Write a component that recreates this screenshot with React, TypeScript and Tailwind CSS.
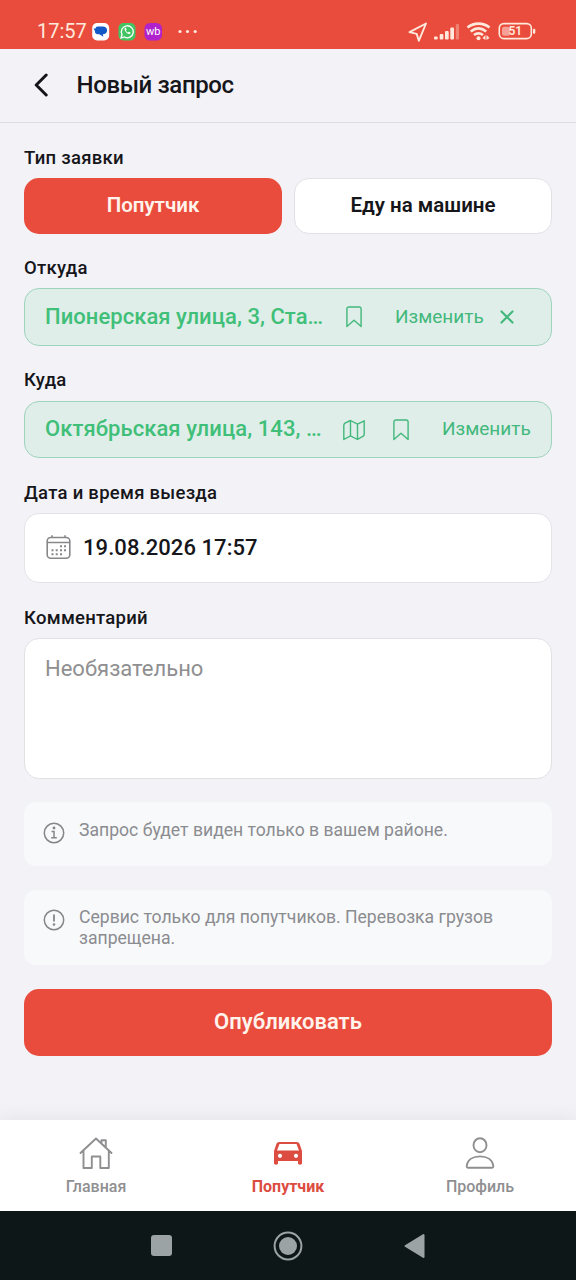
import type { ReactNode } from "react";

function StatusBar() {
  return (
    <div className="flex h-[49px] items-end bg-[#e94c3c] pr-[40px] pb-[6px] pl-[37px] text-[#ffe9dc]">
      <span className="w-[55px] text-[20px] leading-[23px] whitespace-nowrap">17:57</span>
      <svg className="mb-[2px] h-[18px] w-[72px]" viewBox="0 0 72 18">
        <rect x="0.2" width="17" height="17.5" rx="5" fill="#fff" />
        <path d="M5.5 3.5h5.3c2.5 0 4.3 1.5 4.3 4 0 2.3-1.8 3.800-4.3 3.800l.5 2.500-3.800-2.500H6c-2 0-3-1-3-2.500V8L1.500 5.500h2c.3-1.200 1-2 2-2z" fill="#1459c5" />
        <rect x="26.5" width="17" height="17.5" rx="5" fill="#43c463" />
        <path d="M29 15l1-3.500a6 6 0 1 1 2.400 2.500z" fill="none" stroke="#fff" strokeWidth="1.3" />
        <path d="M32.8 5.200c.7-.7 1.300-.3 1.800 1.300l-.7.9c.4 1 1.200 1.800 2.200 2.200l.9-.8c1.500.6 2 1 1.300 1.800-1.200 1.600-6.800-2.300-5.500-5.400z" fill="#fff" />
        <rect x="52.5" width="17.500" height="17.500" rx="5.500" fill="#b023cc" />
        <text x="61.200" y="12" textAnchor="middle" fontSize="11" fill="#fff">wb</text>
      </svg>
      <svg className="ml-[14px] h-[20px] w-[20px]" viewBox="0 0 20 20" fill="currentColor">
        <circle cx="2" cy="8.500" r="1.600" /><circle cx="9.500" cy="8.500" r="1.600" /><circle cx="17.200" cy="8.500" r="1.600" />
      </svg>
      <svg className="mb-[1px] ml-auto h-[20px] w-[128px]" viewBox="0 0 128 20" fill="none" stroke="currentColor">
        <path d="M18 1.500L1.500 10.200l7.200 1.700 2.100 6.900z" strokeWidth="1.900" strokeLinejoin="round" />
        <g fill="currentColor" stroke="none">
          <rect x="26" y="14.500" width="3.700" height="3" rx="1" />
          <rect x="31.700" y="12" width="3.700" height="5.500" rx="1" />
          <rect x="37" y="9" width="3.700" height="8.500" rx="1" />
          <rect x="42.300" y="5.500" width="3.700" height="12" rx="1" />
          <rect x="47.800" y="2" width="3.200" height="15.500" rx="1" opacity=".35" />
          <circle cx="70.500" cy="16.200" r="2" />
          <path d="M77.500 13v5l-3-2zM78.500 18v-5l3 3z" />
        </g>
        <path d="M59.500 5.500c6.500-5.200 15.500-5.200 22 0M62.700 9.500c5-4 10.500-4 15.500 0M66 13c3-2.200 6-2.200 9 0" strokeWidth="2.700" />
        <rect x="91.300" y="1.600" width="32" height="15" rx="4.500" strokeWidth="1.600" />
        <rect x="94" y="4.700" width="8" height="9" rx="2" fill="#f7a095" stroke="none" />
        <rect x="125" y="6.700" width="2.300" height="5" rx="1" fill="currentColor" stroke="none" />
        <text x="107.300" y="13.400" textAnchor="middle" fontSize="12" fontWeight="600" fill="currentColor" stroke="none">51</text>
      </svg>
    </div>
  );
}

function Label({ children }: { children: ReactNode }) {
  return <div className="h-[22px] text-[18.500px] leading-[22px] font-medium tracking-[0.270px] text-[#16161a]">{children}</div>;
}

function Bookmark() {
  return (
    <svg className="h-[22px] w-[16px] shrink-0" viewBox="0 0 16 22" fill="none" stroke="#43b87c" strokeWidth="1.400" strokeLinejoin="round">
      <path d="M.9 3A2 2 0 0 1 2.900 1h10.200a2 2 0 0 1 2 2v17.500L8 14.200.9 20.500z" />
    </svg>
  );
}

function MapIcon() {
  return (
    <svg className="h-[22px] w-[22px] shrink-0" viewBox="0 0 22 22" fill="none" stroke="#43b87c" strokeWidth="1.400" strokeLinejoin="round">
      <path d="M7.500 1.500L2 4.200Q.8 5 .8 6.500v14l6.700-3.700 7 3.700 5.700-3.300q1-.6 1-1.900V1.800l-6.700 3.400zM7.500 1.500v15.300M14.500 5.200v15.300" />
    </svg>
  );
}

function Notice({ children, icon, className }: { children: ReactNode; icon: ReactNode; className: string }) {
  return (
    <div className={`flex gap-[14px] rounded-[12px] bg-[#f8f9fb] pl-[19px] text-[17.600px] leading-[21px] text-[#8b8c90] ${className}`}>
      <svg className="mt-[2px] h-[22px] w-[22px] shrink-0" viewBox="0 0 22 22" fill="none" stroke="#85868a" strokeWidth="1.500">
        <circle cx="11" cy="11" r="9.700" />
        {icon}
      </svg>
      <p className="whitespace-nowrap">{children}</p>
    </div>
  );
}

function Tab({ icon, label, active }: { icon: ReactNode; label: string; active?: boolean }) {
  return (
    <div className={active ? "flex flex-1 flex-col items-center pt-[16px] font-bold text-[#dc4c40]" : "flex flex-1 flex-col items-center pt-[16px] font-medium text-[#8f8f91]"}>
      <svg className="h-[34px] w-[34px]" viewBox="0 0 34 34" fill="none" stroke="currentColor" strokeWidth="1.900" strokeLinejoin="round" strokeLinecap="round">{icon}</svg>
      <span className="mt-[7px] text-[16px] leading-[20px]">{label}</span>
    </div>
  );
}

export default function App() {
  return (
    <div className="flex h-[1280px] w-[576px] flex-col overflow-hidden bg-[#f2f2f7] font-['Roboto',sans-serif]">
      <StatusBar />
      <header className="flex h-[74px] items-center border-b border-[#dddde3] pb-[2px] pl-[33px]">
        <svg className="h-[24px] w-[16px]" viewBox="0 0 16 24" fill="none" stroke="#16161a" strokeWidth="3" strokeLinecap="round" strokeLinejoin="round">
          <path d="M13.200 2L3.200 12l10 10" />
        </svg>
        <h1 className="ml-[27.500px] text-[24px] leading-[28px] font-medium tracking-[-0.380px] text-[#16161a]">Новый запрос</h1>
      </header>
      <main className="flex h-[997px] shrink-0 flex-col px-[24px] pt-[24px]">
        <Label>Тип заявки</Label>
        <div className="mt-[9px] grid grid-cols-2 gap-[12px] text-[20.500px] leading-[24px] font-semibold">
          <button className="h-[56px] rounded-[15px] bg-[#e94c3c] pb-[2px] text-[#fff3ec]">Попутчик</button>
          <button className="h-[56px] rounded-[15px] border border-[#e1e1e6] bg-white pb-[2px] text-[#16161a]">Еду на машине</button>
        </div>
        <div className="mt-[23px]"><Label>Откуда</Label></div>
        <div className="mt-[9px] flex h-[58px] shrink-0 items-center rounded-[15px] border border-[#9ed3bc] bg-[#dfeee9] pl-[20px] text-[#43b87c]">
          <span className="w-[301px] pb-[2px] text-[22px] font-medium tracking-[0.050px] whitespace-nowrap text-[#40bf78]">Пионерская улица, 3, Ста…</span>
          <Bookmark />
          <span className="ml-[33px] w-[105px] text-[19px]">Изменить</span>
          <svg className="h-[14px] w-[14px]" viewBox="0 0 14 14" stroke="#43b87c" strokeWidth="2.200" strokeLinecap="round"><path d="M1.500 1.500l11 11m0-11l-11 11" /></svg>
        </div>
        <div className="mt-[23px]"><Label>Куда</Label></div>
        <div className="mt-[10px] flex h-[57px] shrink-0 items-center rounded-[15px] border border-[#9ed3bc] bg-[#dfeee9] pl-[20px] text-[#43b87c]">
          <span className="w-[298px] pb-[2px] text-[22px] font-medium tracking-[0.080px] whitespace-nowrap text-[#40bf78]">Октябрьская улица, 143, …</span>
          <MapIcon />
          <span className="ml-[28px] flex"><Bookmark /></span>
          <span className="ml-[33px] text-[19px]">Изменить</span>
        </div>
        <div className="mt-[24px]"><Label>Дата и время выезда</Label></div>
        <div className="mt-[9px] flex h-[70px] shrink-0 items-center gap-[12px] rounded-[15px] border border-[#e4e4e8] bg-white pb-[2px] pl-[21px]">
          <svg className="h-[24px] w-[25px]" viewBox="0 0 25 24" fill="none" stroke="#88888a" strokeWidth="1.600">
            <rect x="1.200" y="2.500" width="22.600" height="20.700" rx="3.500" />
            <path d="M1.200 7.500h22.600M6 .2v2.500M19 .2v2.500" />
            <path d="M14 11.200h2M18 11.200h2M5.500 15.300h2M9.700 15.300h2M14 15.300h2M18 15.300h2M5.500 19.300h2M9.700 19.300h2M14 19.300h2" strokeWidth="2" />
          </svg>
          <span className="text-[22px] font-medium tracking-[0.070px] text-[#16161a]">19.08.2026 17:57</span>
        </div>
        <div className="mt-[24px]"><Label>Комментарий</Label></div>
        <div className="mt-[9px] h-[141px] shrink-0 rounded-[15px] border border-[#e1e1e5] bg-white pt-[17px] pl-[20px] text-[22px] leading-[26px] text-[#8f8f91]">Необязательно</div>
        <Notice className="mt-[23px] h-[64px] shrink-0 pt-[18px]" icon={<><path d="M8.500 9.500H11v6M8.200 15.700h5.600" /><circle cx="11" cy="6" r=".7" fill="#85868a" /></>}>
          Запрос будет виден только в вашем районе.
        </Notice>
        <Notice className="mt-[24px] h-[75px] shrink-0 pt-[17px]" icon={<><path d="M11 5.500v7" strokeWidth="1.800" /><circle cx="11" cy="15.500" r=".6" fill="#85868a" /></>}>
          Сервис только для попутчиков. Перевозка грузов<br />запрещена.
        </Notice>
        <button className="mt-[24px] h-[67px] shrink-0 rounded-[15px] bg-[#e94c3c] pb-[2px] text-[22px] font-semibold text-[#fff3ec]">Опубликовать</button>
      </main>
      <nav className="flex h-[91px] shrink-0 bg-white shadow-[0_-1px_18px_rgba(0,0,0,0.07)]">
        <Tab label="Главная" icon={<path d="M1.500 17L17 2.500 32.500 17M4.500 14.500V32h8.300V20.500h8.500V32h8.500V14.500M22.500 7V4.200h4.300v7" />} />
        <Tab active label="Попутчик" icon={<path stroke="none" fill="currentColor" fillRule="evenodd" d="M8.500 6h17c1.600 0 2.700.8 3.200 2.300L31 15v12.500c0 1.500-4 1.500-4 0V25H7v2.500c0 1.500-4 1.500-4 0V15l2.300-6.700C5.800 6.800 6.900 6 8.500 6zm0 2L6 14.500h22L25.500 8zM9 17.700a2.100 2.100 0 1 0 0 4.200 2.100 2.100 0 0 0 0-4.200zm16 0a2.100 2.100 0 1 0 0 4.200 2.100 2.100 0 0 0 0-4.200z" />} />
        <Tab label="Профиль" icon={<><ellipse cx="17" cy="9.200" rx="6.500" ry="7" /><path d="M5.500 31.800c-1.500 0-2-.8-1.700-2.400 1-5.500 6-9 13.200-9s12.200 3.500 13.200 9c.3 1.600-.2 2.400-1.700 2.400z" /></>} />
      </nav>
      <div className="flex h-[69px] shrink-0 items-center justify-center gap-[101px] bg-[#0d1718]">
        <div className="h-[21px] w-[21px] rounded-[3px] bg-[#9ca3a5]" />
        <svg className="h-[30px] w-[30px]" viewBox="0 0 30 30" fill="#9ca3a5"><circle cx="15" cy="15" r="13.400" fill="none" stroke="#9ca3a5" strokeWidth="2" /><circle cx="15" cy="15" r="9" /></svg>
        <svg className="h-[26px] w-[21px]" viewBox="0 0 21 26"><path d="M19.500 2v22L1.500 13z" fill="#9ca3a5" stroke="#9ca3a5" strokeWidth="2" strokeLinejoin="round" /></svg>
      </div>
    </div>
  );
}
